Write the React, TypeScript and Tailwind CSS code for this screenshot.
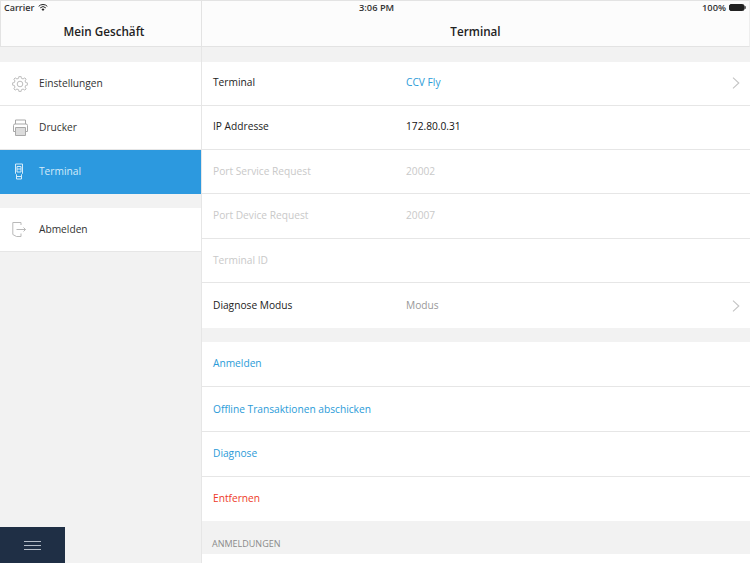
function SideRow({ label, icon, active, textClass }: { label: string; icon: React.ReactNode; active?: boolean; textClass?: string }) {
  return (
    <div className={`flex items-center h-[44px] pl-[12px] ${active ? "bg-[#2c99df] text-[#d5ebf9]" : "bg-white text-[#333] border-b border-[#e6e6e6]"}`}>
      <span className="w-[27px] flex">{icon}</span>
      <span className={`text-[10.2px] ${textClass ?? ""}`}>{label}</span>
    </div>
  );
}

function Chevron() {
  return (
    <svg width="8" height="12" viewBox="0 0 8 12" fill="none" stroke="#c4c4c4" strokeWidth="1.1">
      <path d="M1 .6 6.800 6 1 11.400" />
    </svg>
  );
}

function FormRow({ label, value, valueClass, labelClass, chevron, h, last }: { label: string; value?: string; valueClass?: string; labelClass?: string; chevron?: boolean; h: string; last?: boolean }) {
  return (
    <div className={`flex items-center ${h} pl-[11px] pr-[10px] bg-white text-[10.2px] ${last ? "" : "border-b border-[#e6e6e6]"}`}>
      <span className={`w-[193px] whitespace-nowrap ${labelClass ?? "text-[#222]"}`}>{label}</span>
      <span className={`flex-1 ${valueClass ?? ""}`}>{value}</span>
      {chevron && <Chevron />}
    </div>
  );
}

function GearIcon() {
  // eight toothed outline
  const pts: string[] = [];
  for (let i = 0; i < 8; i++) {
    const a = (i * Math.PI) / 4 - Math.PI / 2;
    [[-0.24, 5.9], [-0.12, 7.8], [0.12, 7.8], [0.24, 5.9]].forEach(([d, r]) => {
      pts.push(`${(8 + r * Math.cos(a + d)).toFixed(2)},${(8 + r * Math.sin(a + d)).toFixed(2)}`);
    });
  }
  return (
    <svg width="16" height="16" viewBox="0 0 16 16" fill="none" stroke="#ababab" strokeWidth="0.8">
      <polygon points={pts.join(" ")} />
      <circle cx="8" cy="8" r="2.800" />
    </svg>
  );
}

function PrinterIcon() {
  return (
    <svg width="17" height="17" viewBox="0 0 17 17" fill="none" stroke="#a9a9a9" strokeWidth="1">
      <path d="M3.500 5V1h10v4" />
      <path d="M3.500 12.500h-2v-6a1.500 1.500 0 0 1 1.500-1.500h11a1.500 1.500 0 0 1 1.500 1.500v6h-2" />
      <path d="M3.500 8.500h10v8h-10z" fill="#dcdcdc" />
    </svg>
  );
}

function TerminalIcon() {
  return (
    <svg width="12" height="17" viewBox="0 0 12 17" fill="none" stroke="#d5ebf9" strokeWidth="1">
      <path d="M2.500 1h7v9.500l-1 1v4.500h-5v-4.500l-1-1z" />
      <path d="M4 3.500h4v5.500h-4zM4 6h4M4 13.500h4" />
    </svg>
  );
}

function LogoutIcon() {
  return (
    <svg width="15" height="17" viewBox="0 0 15 17" fill="none" stroke="#b9b9b9" strokeWidth="1">
      <path d="M9 4V1.500H.8v12l3.700 2h4.500v-3" />
      <path d="M4.500 8.500h9M11.500 6.500l2 2-2 2" />
    </svg>
  );
}

export default function App() {
  return (
    <div className="w-[750px] h-[563px] overflow-hidden bg-[#f2f2f2] relative font-['Open_Sans',sans-serif]">
      {/* status + nav */}
      <div className="h-[47px] bg-[#fcfcfc] border border-[#e3e3e3] border-r-[#eeeeee] relative flex">
        <div className="absolute inset-x-0 top-0 h-[13px] flex items-center justify-between pl-[3px] pr-[3px] text-[9px] font-semibold text-[#333]">
          <span className="flex items-center gap-[4px]">
            Carrier
            <svg width="10" height="7" viewBox="0 0 10 7" fill="none" stroke="#222" strokeWidth="1">
              <path d="M.7 2.300a6 6 0 0 1 8.600 0M2.200 3.900a4 4 0 0 1 5.600 0" />
              <path d="M5 7 3.500 5.300a2 2 0 0 1 3 0z" fill="#222" stroke="none" />
            </svg>
          </span>
          <span className="absolute left-[358px] text-[9.3px]">3:06 PM</span>
          <span className="flex items-center gap-[3px] text-[9.300px]">
            100%
            <svg width="17" height="7" viewBox="0 0 17 7">
              <rect x="0.500" y="0.500" width="14.500" height="6" rx="1.500" fill="#222" stroke="#222" />
              <rect x="15.500" y="2.200" width="1.200" height="2.600" fill="#222" />
            </svg>
          </span>
        </div>
        <div className="w-[200px] flex items-center justify-center text-[11.7px] font-semibold text-[#222] pt-[17px] pl-[6px]">Mein Geschäft</div>
        <div className="flex-1 flex items-center justify-center text-[11.7px] font-semibold text-[#222] border-l border-[#e3e3e3] pt-[17px]">Terminal</div>
      </div>

      <div className="flex">
        {/* sidebar */}
        <div className="w-[202px] shrink-0 pt-[15px] border-r border-[#e6e6e6] h-[516px]">
          <SideRow label="Einstellungen" icon={<GearIcon />} />
          <SideRow label="Drucker" icon={<PrinterIcon />} />
          <SideRow label="Terminal" active textClass="pb-[1px]" icon={<span className="pl-[1px] pb-[1px]"><TerminalIcon /></span>} />
          <div className="h-[14px]" />
          <SideRow label="Abmelden" textClass="pt-[1px]" icon={<LogoutIcon />} />
        </div>

        {/* content */}
        <div className="flex-1 pt-[15px]">
          <FormRow h="h-[44px] pb-[1px]" label="Terminal" value="CCV Fly" valueClass="text-[#2b9bd8]" chevron />
          <FormRow h="h-[44px] pb-[1px]" label="IP Addresse" value="172.80.0.31" valueClass="text-[#111]" />
          <FormRow h="h-[44px]" label="Port Service Request" value="20002" labelClass="text-[#c9c9c9]" valueClass="text-[#c9c9c9]" />
          <FormRow h="h-[45px]" label="Port Device Request" value="20007" labelClass="text-[#c9c9c9]" valueClass="text-[#c9c9c9]" />
          <FormRow h="h-[44px]" label="Terminal ID" labelClass="text-[#c9c9c9]" />
          <FormRow h="h-[45px]" label="Diagnose Modus" value="Modus" valueClass="text-[#999]" chevron last />
          <div className="h-[14px]" />
          <FormRow h="h-[45px]" label="Anmelden" labelClass="text-[#2b9bd8]" />
          <FormRow h="h-[45px] pt-[1px]" label="Offline Transaktionen abschicken" labelClass="text-[#2b9bd8]" />
          <FormRow h="h-[45px] pb-[1px]" label="Diagnose" labelClass="text-[#2b9bd8]" />
          <FormRow h="h-[44px] pb-[1px]" label="Entfernen" labelClass="text-[#ee3a2a]" last />
          <div className="h-[33px] flex items-end pl-[10px] pb-[4px] text-[9px] text-[#8a8a8a]">ANMELDUNGEN</div>
          <div className="h-[20px] bg-white" />
        </div>
      </div>

      {/* menu button */}
      <div className="absolute left-0 bottom-0 w-[65px] h-[36px] bg-[#1f2f45] flex flex-col items-center justify-center gap-[3px]">
        <span className="w-[17px] h-px bg-[#b5bdc8]" />
        <span className="w-[17px] h-px bg-[#b5bdc8]" />
        <span className="w-[17px] h-px bg-[#b5bdc8]" />
      </div>
    </div>
  );
}
